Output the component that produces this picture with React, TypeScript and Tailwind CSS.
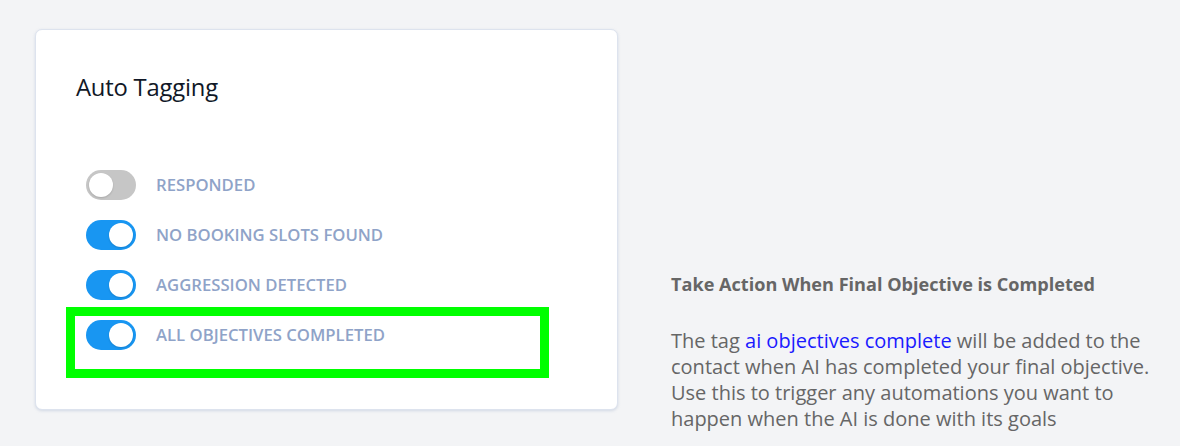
import React, { useState } from 'react'

const TAGS = [
  { id: 'responded', label: 'Responded', on: false },
  { id: 'no-slots', label: 'No Booking Slots Found', on: true },
  { id: 'aggression', label: 'Aggression Detected', on: true },
  { id: 'all-objectives', label: 'All Objectives Completed', on: true, highlight: true },
]

const Toggle: React.FC<{ on: boolean; onClick: () => void }> = ({ on, onClick }) => (
  <button
    onClick={onClick}
    className={`relative w-[50px] h-[30px] rounded-full flex-shrink-0 transition-colors ${on ? 'bg-[#1896f2]' : 'bg-[#c6c6c6]'}`}
  >
    <span
      className={`absolute top-[3px] w-[24px] h-[24px] rounded-full bg-white shadow-[0_1px_2px_rgba(0,0,0,0.15)] transition-all ${on ? 'left-[23px]' : 'left-[3px]'}`}
    />
  </button>
)

export default function App() {
  const [state, setState] = useState<Record<string, boolean>>(
    Object.fromEntries(TAGS.map(t => [t.id, t.on]))
  )

  return (
    <div className="w-[1180px] h-[446px] bg-[#f3f4f6] overflow-hidden flex items-start gap-[53px] pl-[35px] pt-[29px]" style={{ fontFamily: '"Open Sans", sans-serif' }}>
      {/* Auto tagging card */}
      <div className="w-[583px] h-[381px] bg-white rounded-[7px] border border-[#dde3ee] shadow-[0_1px_3px_rgba(150,165,195,0.35)] pl-[40px] pt-[41px] flex-shrink-0">
        <h2 className="text-[23.8px] leading-[32px] text-[#111827] tracking-[-0.2px]">Auto Tagging</h2>

        <div className="mt-[67px] pl-[10px] flex flex-col gap-[20px]">
          {TAGS.map(t => (
            <div key={t.id} className="relative flex items-center gap-[20px] h-[30px]">
              {t.highlight && (
                <div className="absolute -left-[20px] -top-[13px] w-[483px] h-[71px] border-[9px] border-[#00ff00] pointer-events-none" />
              )}
              <Toggle on={state[t.id]} onClick={() => setState(p => ({ ...p, [t.id]: !p[t.id] }))} />
              <span className="text-[16.7px] font-semibold uppercase text-[#8fa3c8]">{t.label}</span>
            </div>
          ))}
        </div>
      </div>

      {/* Explanation */}
      <div className="mt-[241px] w-[486px] text-[#666666]">
        <h3 className="text-[18.1px] font-bold leading-[28px]">Take Action When Final Objective is Completed</h3>
        <p className="mt-[30px] text-[20px] leading-[26px]">
          The tag <span className="text-[#1a1aff]">ai objectives complete</span> will be added to the contact when AI has
          completed your final objective. Use this to trigger any automations you want to happen when the AI is done with its goals
        </p>
      </div>
    </div>
  )
}
